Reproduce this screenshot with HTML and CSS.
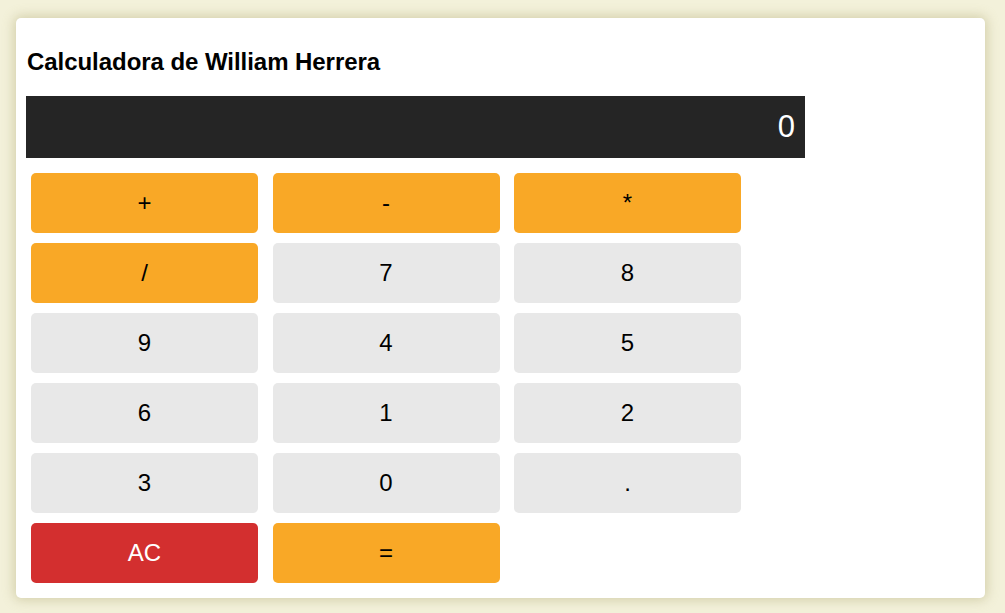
FILE: index.html
```html
<!DOCTYPE html>
<html lang="es">
<head>
<meta charset="utf-8">
<title>Calculadora</title>
<link rel="stylesheet" href="styles.css">
</head>
<body>
<main class="card">
  <h2 class="title">Calculadora de William Herrera</h2>
  <div class="display">0</div>
  <div class="keys">
    <button class="key op">+</button>
    <button class="key op">-</button>
    <button class="key op">*</button>
    <button class="key op">/</button>
    <button class="key">7</button>
    <button class="key">8</button>
    <button class="key">9</button>
    <button class="key">4</button>
    <button class="key">5</button>
    <button class="key">6</button>
    <button class="key">1</button>
    <button class="key">2</button>
    <button class="key">3</button>
    <button class="key">0</button>
    <button class="key">.</button>
    <button class="key clear">AC</button>
    <button class="key op">=</button>
  </div>
</main>
</body>
</html>
```

FILE: styles.css
```css
html, body {
  margin: 0;
  padding: 0;
}
body {
  background: #f3f1da;
  font-family: "Liberation Sans", Arial, sans-serif;
  padding: 18px 20px 15px 16px;
  box-sizing: border-box;
  height: 613px;
}
.card {
  background: #ffffff;
  border-radius: 5px;
  box-shadow: 0 0 12px 2px rgba(170, 165, 110, 0.45);
  padding: 0 10px 10px 10px;
  height: 580px;
  box-sizing: border-box;
}
.title {
  margin: 0;
  padding-top: 30px;
  height: 78px;
  box-sizing: border-box;
  font-size: 24px;
  font-weight: bold;
  line-height: 28px;
  color: #000;
  padding-left: 1px;
  letter-spacing: -0.05px;
}
.display {
  width: 779px;
  height: 62px;
  background: #252525;
  color: #ffffff;
  font-size: 31px;
  line-height: 62px;
  text-align: right;
  padding-right: 10px;
  box-sizing: border-box;
}
.keys {
  display: grid;
  grid-template-columns: repeat(3, 227px);
  grid-auto-rows: 60px;
  column-gap: 14.5px;
  row-gap: 10px;
  padding: 15px 5px 0 5px;
}
.key {
  border: none;
  border-radius: 5px;
  background: #e8e8e8;
  color: #000;
  font-family: "Liberation Sans", Arial, sans-serif;
  font-size: 24px;
  padding: 0;
  margin: 0;
}
.key.op {
  background: #f9a826;
}
.key.clear {
  background: #d32f2f;
  color: #ffffff;
}
```
